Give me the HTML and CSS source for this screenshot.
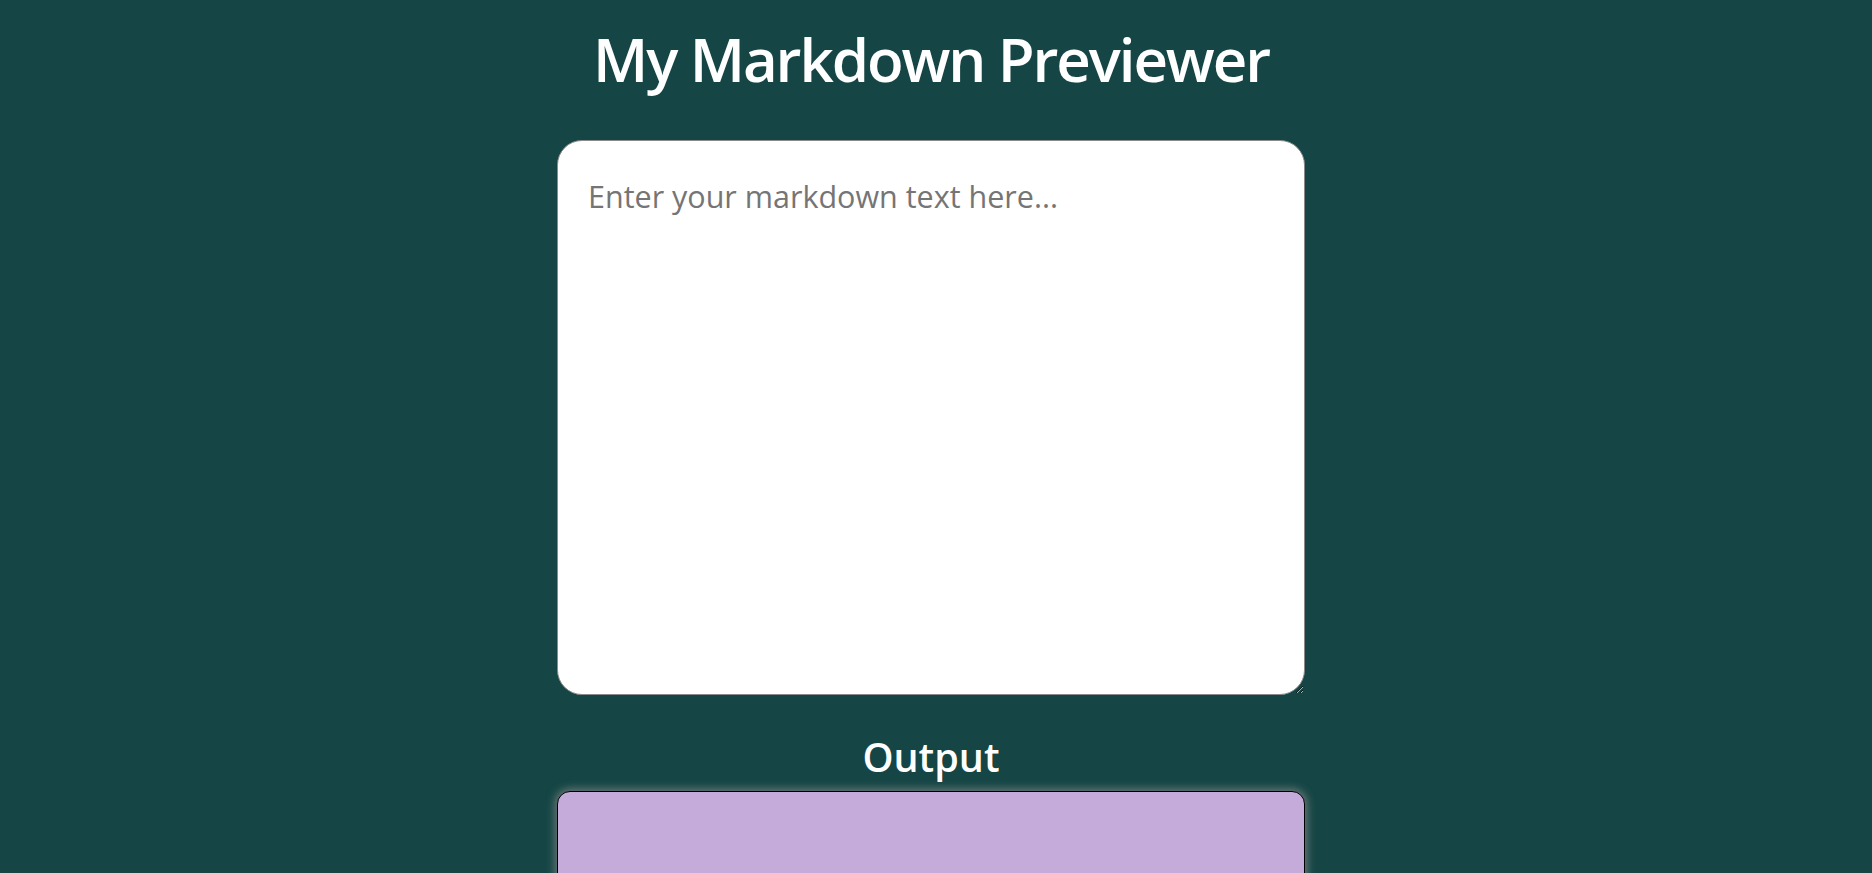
FILE: index.html
```html
<!DOCTYPE html>
<html lang="en">
<head>
<meta charset="utf-8">
<title>My Markdown Previewer</title>
<link rel="stylesheet" href="styles.css">
</head>
<body>
<main class="page">
  <h1 class="title">My Markdown Previewer</h1>
  <textarea class="editor" placeholder="Enter your markdown text here..."></textarea>
  <h2 class="output-title">Output</h2>
  <div class="preview"></div>
</main>
</body>
</html>
```

FILE: styles.css
```css
html {
  overflow: hidden;
}
body {
  margin: 0;
  background: #154645;
  font-family: "Open Sans", "Noto Sans", sans-serif;
}
.page {
  display: flex;
  flex-direction: column;
  align-items: center;
  padding-right: 10px;
}
.title {
  margin: 18px 0 0;
  font-size: 60px;
  font-weight: 600;
  line-height: 82px;
  color: #ffffff;
  letter-spacing: -2.1px;
}
.editor {
  box-sizing: border-box;
  width: 748px;
  height: 555px;
  margin-top: 40px;
  padding: 34px 30px 30px;
  border: 1px solid #8a8a8a;
  border-radius: 25px;
  background: #ffffff;
  font-family: "Open Sans", "Noto Sans", sans-serif;
  font-size: 30.5px;
  color: #222;
  outline: none;
}
.editor::placeholder {
  color: #757575;
}
.output-title {
  margin: 36px 0 0;
  font-size: 39.5px;
  font-weight: 600;
  line-height: 52px;
  color: #ffffff;
}
.preview {
  box-sizing: border-box;
  width: 748px;
  height: 400px;
  margin-top: 8px;
  background: #c5abd9;
  border: 1px solid #000;
  border-radius: 13px;
  box-shadow: 0 0 8px 2px rgba(140, 140, 140, 0.75);
}
```
